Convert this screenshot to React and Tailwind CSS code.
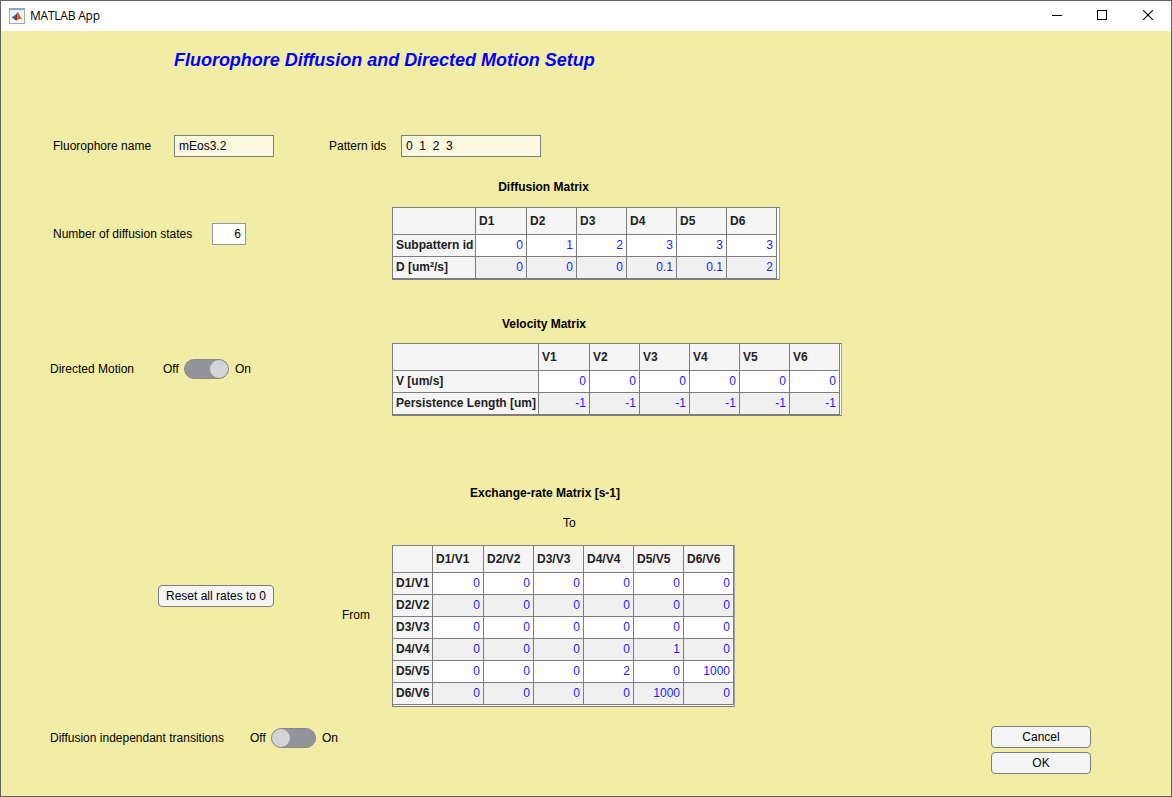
import React from "react";

function MatlabIcon() {
  return (
    <svg width="16" height="16" viewBox="0 0 16 16" className="block">
      <rect x="0.5" y="0.5" width="15" height="15" fill="#f3f4f6" stroke="#a3a9b0" />
      <rect x="0" y="0" width="16" height="2" fill="#86abd0" />
      <rect x="1" y="2" width="14" height="1" fill="#d9e6f1" />
      <path d="M2.4 9.2 L5.2 7.8 L7.4 5.8 L8.4 4.2 L7 9.6 L5 11 Z" fill="#2f74b0" />
      <path d="M5 11 L6.6 8.6 L8.6 4 L9 9.5 L7.2 12.6 Z" fill="#7d2a20" />
      <path d="M8.6 4 C9.8 4.4 10.6 8 13.2 11.4 C11.4 10.2 10 10.8 7.2 13 C8.6 10.6 8 7 8.6 4 Z" fill="#d4521c" />
      <path d="M8.6 4.8 C9.6 6.6 9.6 9 8.2 12 C8.4 9.4 8.2 7 8.6 4.8 Z" fill="#f59a3a" />
    </svg>
  );
}

function TitleBar() {
  return (
    <div className="flex h-[30px] items-center bg-white pl-2">
      <MatlabIcon />
      <span className="ml-[5px] font-['Open_Sans',sans-serif] text-[12px] leading-[16px] tracking-[-0.22px]">MATLAB App</span>
      <div className="ml-auto flex">
        <div className="flex h-[30px] w-[46px] items-start justify-center pt-[9px]">
          <svg width="11" height="11" shapeRendering="crispEdges"><rect x="0" y="5" width="10" height="1" /></svg>
        </div>
        <div className="flex h-[30px] w-[45px] items-start justify-center pt-[9px]">
          <svg width="11" height="11" shapeRendering="crispEdges"><rect x="0.5" y="0.5" width="9" height="9" fill="none" stroke="#000" /></svg>
        </div>
        <div className="flex h-[30px] w-[46px] items-start justify-center pt-[9px] pr-px">
          <svg width="10" height="10"><path d="M0 0 L10 10 M10 0 L0 10" stroke="#000" strokeWidth="1.1" /></svg>
        </div>
      </div>
    </div>
  );
}

function Matrix({ columns, rows, className, headClass }) {
  return (
    <div className={"shrink-0 border border-[#7d7d7d] bg-white " + className}>
      <div className="flex">
        <div className={"h-[27px] shrink-0 border-r border-b border-[#7d7d7d] bg-[#f5f5f5] " + headClass} />
        {columns.map((c, i) => (
          <div key={c} className={"flex h-[27px] shrink-0 items-center border-r border-b border-[#7d7d7d] bg-[#f5f5f5] pl-[3px] font-bold text-[#212121] " + (i === 0 ? "w-[51px]" : "w-[50px]")}>
            {c}
          </div>
        ))}
      </div>
      {rows.map((r, ri) => (
        <div key={r.name} className="flex">
          <div className={"flex h-[22px] shrink-0 items-center border-r border-b border-[#7d7d7d] bg-[#f5f5f5] pb-px pl-[3px] font-bold whitespace-nowrap text-[#212121] " + headClass}>
            {r.name}
          </div>
          {r.values.map((v, i) => (
            <div key={i} className={"flex h-[22px] shrink-0 items-center justify-end border-r border-b border-[#7d7d7d] pr-[3px] pb-px text-[#1a1aff] " + (i === 0 ? "w-[51px] " : "w-[50px] ") + (ri % 2 ? "bg-[#f0f0f0]" : "bg-white")}>
              {v}
            </div>
          ))}
        </div>
      ))}
    </div>
  );
}

function Toggle({ on }) {
  return (
    <div className={"flex h-5 w-[45px] items-center rounded-full border border-[#88898d] bg-[#939499] " + (on ? "justify-end" : "justify-start")}>
      <div className="h-[18px] w-[18px] rounded-full bg-[#d3d4d6]" />
    </div>
  );
}

function Button({ children, className }) {
  return (
    <button className={"flex h-[22px] items-center justify-center rounded-[4px] border border-[#7d7d7d] bg-[#f5f5f5] whitespace-nowrap " + className}>
      {children}
    </button>
  );
}

const states = [1, 2, 3, 4, 5, 6];
const rates = [
  [0, 0, 0, 0, 0, 0],
  [0, 0, 0, 0, 0, 0],
  [0, 0, 0, 0, 0, 0],
  [0, 0, 0, 0, 1, 0],
  [0, 0, 0, 2, 0, 1000],
  [0, 0, 0, 0, 1000, 0],
];

export default function App() {
  return (
    <div className="h-[797px] w-[1172px] overflow-hidden border border-[#626262] bg-[#f2eda6] font-['Liberation_Sans',Arial,sans-serif] text-[12px] leading-[16px] text-black">
      <TitleBar />
      <div className="h-[104px] pt-[17px] pl-[173px]">
        <h1 className="text-[18px] leading-[24px] font-bold tracking-[-0.02px] whitespace-nowrap text-[#0000ff] italic">Fluorophore Diffusion and Directed Motion Setup</h1>
      </div>

      <div className="flex h-[22px] items-center pl-[52px]">
        <span className="w-[121px]">Fluorophore name</span>
        <div className="flex h-[22px] w-[100px] items-center border border-[#7d7d7d] bg-[#faf8df] pl-1">mEos3.2</div>
        <span className="ml-[55px] w-[72px]">Pattern ids</span>
        <div className="flex h-[22px] w-[140px] items-center border border-[#7d7d7d] bg-[#faf8df] pl-1 whitespace-pre">0  1  2  3</div>
      </div>

      <section className="flex">
        <div className="flex w-[391px] items-start pt-[66px] pl-[52px]">
          <span className="mt-[3px] w-[159px]">Number of diffusion states</span>
          <div className="flex h-[22px] w-[34px] items-center justify-end border border-[#999] bg-white pr-1">6</div>
        </div>
        <div className="pt-[22px]">
          <h2 className="mb-[12px] w-[303px] text-center font-bold">Diffusion Matrix</h2>
          <Matrix
            className="h-[73px] w-[388px] border-r-[#a3a3a3]"
            headClass="w-[83px]"
            columns={states.map((n) => "D" + n)}
            rows={[
              { name: "Subpattern id", values: [0, 1, 2, 3, 3, 3] },
              { name: "D [um²/s]", values: [0, 0, 0, 0.1, 0.1, 2] },
            ]}
          />
        </div>
      </section>

      <section className="flex">
        <div className="flex w-[391px] items-start pt-[79px] pl-[49px]">
          <span className="mt-[2px] w-[113px]">Directed Motion</span>
          <span className="mt-[2px] w-[21px]">Off</span>
          <Toggle on />
          <span className="mt-[2px] ml-[6px]">On</span>
        </div>
        <div className="pt-[36px]">
          <h2 className="mb-[11px] w-[304px] text-center font-bold">Velocity Matrix</h2>
          <Matrix
            className="h-[73px] w-[450px] border-r-[#a3a3a3]"
            headClass="w-[146px]"
            columns={states.map((n) => "V" + n)}
            rows={[
              { name: "V [um/s]", values: [0, 0, 0, 0, 0, 0] },
              { name: "Persistence Length [um]", values: [-1, -1, -1, -1, -1, -1] },
            ]}
          />
        </div>
      </section>

      <section className="flex">
        <div className="flex w-[391px] items-start pt-[169px] pl-[157px]">
          <Button className="w-[116px]">Reset all rates to 0</Button>
          <span className="mt-[22px] ml-[68px]">From</span>
        </div>
        <div className="pt-[69px]">
          <h2 className="w-[306px] text-center font-bold">Exchange-rate Matrix [s-1]</h2>
          <div className="mt-[14px] mb-[14px] pl-[171px]">To</div>
          <Matrix
            className="h-[162px] w-[343px] border-r-[#a3a3a3]"
            headClass="w-[40px]"
            columns={states.map((n) => `D${n}/V${n}`)}
            rows={rates.map((values, i) => ({ name: `D${i + 1}/V${i + 1}`, values }))}
          />
        </div>
      </section>

      <div className="flex items-start pt-[19px] pl-[49px]">
        <span className="mt-[4px] w-[200px]">Diffusion independant transitions</span>
        <span className="mt-[4px] w-[21px]">Off</span>
        <div className="mt-[2px]"><Toggle /></div>
        <span className="mt-[4px] ml-[6px]">On</span>
        <div className="mr-[80px] ml-auto flex flex-col gap-1">
          <Button className="w-[100px]">Cancel</Button>
          <Button className="w-[100px]">OK</Button>
        </div>
      </div>
    </div>
  );
}
